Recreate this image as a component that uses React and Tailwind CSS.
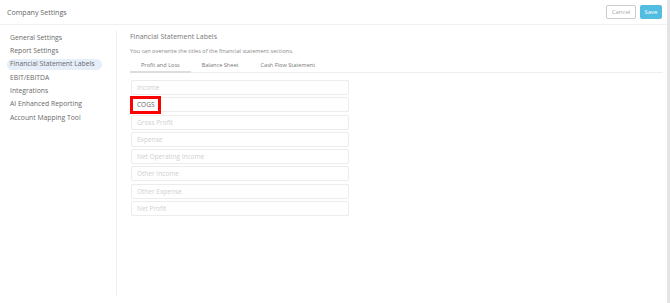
import { useState } from "react";

const menu = [
  "General Settings",
  "Report Settings",
  "Financial Statement Labels",
  "EBIT/EBITDA",
  "Integrations",
  "AI Enhanced Reporting",
  "Account Mapping Tool",
];

const tabs = ["Profit and Loss", "Balance Sheet", "Cash Flow Statement"];

const fields = [
  { label: "Income" },
  { label: "COGS", value: "COGS" },
  { label: "Gross Profit" },
  { label: "Expense" },
  { label: "Net Operating Income" },
  { label: "Other Income" },
  { label: "Other Expense" },
  { label: "Net Profit" },
];

export default function App() {
  const [tab, setTab] = useState(0);

  return (
    <div
      className="w-[670px] h-[303px] bg-white flex overflow-hidden"
      style={{ fontFamily: '"Open Sans", "Liberation Sans", sans-serif' }}
    >
      <div className="flex-1 flex flex-col">
        {/* Header */}
        <div className="h-[25px] border-b border-[#f0f0f0] flex items-center justify-between pl-[7px] pr-[5px]">
          <span className="text-[7.1px] text-[#666]">Company Settings</span>
          <div className="flex items-center gap-[4px]">
            <button className="h-[14px] w-[30px] border border-[#ccc] rounded-[2px] text-[6px] text-[#aaa] flex items-center justify-center">
              Cancel
            </button>
            <button className="h-[14px] w-[22px] bg-[#52bde0] rounded-[2px] text-[6px] text-white flex items-center justify-center">
              Save
            </button>
          </div>
        </div>

        {/* Body */}
        <div className="flex-1 flex pt-[6px] pb-[7px]">
          {/* Sidebar */}
          <div className="w-[117px] border-r border-[#eee] pl-[7px] pr-[14px]">
            <div className="flex flex-col">
              {menu.map((m, i) => (
                <div key={m} className="h-[13.33px] flex items-center">
                  <span
                    className={
                      "h-[11px] px-[3px] flex items-center rounded-full text-[6.8px] text-[#6a6a6a] whitespace-nowrap " +
                      (i === 2 ? "bg-[#e6eefa] w-full" : "")
                    }
                  >
                    {m}
                  </span>
                </div>
              ))}
            </div>
          </div>

          {/* Main */}
          <div className="flex-1 pl-[13px] pr-[4px]">
            <div className="h-[12px] flex items-center text-[7px] text-[#777]">
              Financial Statement Labels
            </div>
            <div className="mt-[4px] h-[9px] flex items-center text-[5.6px] text-[#888]">
              You can overwrite the titles of the financial statement sections.
            </div>
            <div className="mt-[4px] flex border-b border-[#eee]">
              {tabs.map((t, i) => (
                <button
                  key={t}
                  onClick={() => setTab(i)}
                  className={
                    "h-[13px] px-[11px] text-[5.6px] text-[#777] flex items-center border-b-[2px] -mb-px " +
                    (tab === i ? "border-[#ddd]" : "border-transparent")
                  }
                >
                  {t}
                </button>
              ))}
            </div>
            <div className="mt-[7px] w-[218px] ml-[1px] flex flex-col gap-[2.3px]">
              {fields.map((f) => (
                <div key={f.label} className="relative h-[15px]">
                  <input
                    defaultValue={f.value || ""}
                    placeholder={f.label}
                    className="block w-full h-[15px] border border-[#ececec] rounded-[2px] px-[5px] text-[6.5px] text-[#666] placeholder:text-[#cfcfcf] outline-none"
                  />
                  {f.value && (
                    <div className="absolute left-[-1px] top-[-1px] w-[31px] h-[18px] border-[3px] border-[#f00]" />
                  )}
                </div>
              ))}
            </div>
          </div>
        </div>
      </div>
      <div className="w-[3px] bg-[#e4e4e4]" />
    </div>
  );
}
